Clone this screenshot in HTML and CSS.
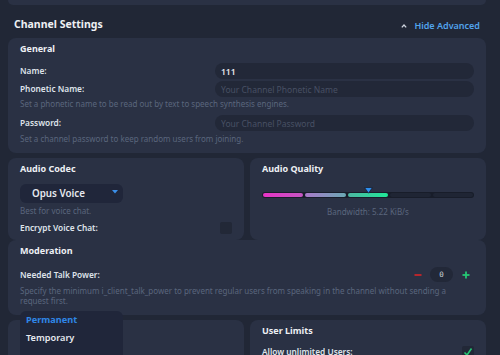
FILE: index.html
```html
<!DOCTYPE html>
<html>
<head>
<meta charset="utf-8">
<link rel="stylesheet" href="styles.css">
</head>
<body>
<div class="page">
  <div class="prev-card"></div>

  <div class="header">
    <h1 class="page-title">Channel Settings</h1>
    <button class="toggle">
      <svg class="chev" width="6" height="4" viewBox="0 0 6 4"><polyline points="0.8,3.4 3,1 5.2,3.4" fill="none" stroke="#cfd5df" stroke-width="1.3"/></svg>
      <span>Hide Advanced</span>
    </button>
  </div>

  <section class="card general">
    <h2 class="card-title">General</h2>
    <div class="fields">
      <div class="field"><label class="label">Name:</label><input class="input" value="111"></div>
      <div class="field"><label class="label">Phonetic Name:</label><input class="input" placeholder="Your Channel Phonetic Name"></div>
    </div>
    <p class="desc d1">Set a phonetic name to be read out by text to speech synthesis engines.</p>
    <div class="field f3"><label class="label">Password:</label><input class="input" placeholder="Your Channel Password"></div>
    <p class="desc d2">Set a channel password to keep random users from joining.</p>
  </section>

  <div class="row2 audio">
    <section class="card codec">
      <h2 class="card-title">Audio Codec</h2>
      <div class="select">
        <span>Opus Voice</span>
        <svg width="6" height="4" viewBox="0 0 6 4"><polygon points="0,0 6,0 3,3.5" fill="#3b8fe8"/></svg>
      </div>
      <p class="desc d3">Best for voice chat.</p>
      <div class="check-row">
        <span class="label">Encrypt Voice Chat:</span>
        <span class="checkbox"></span>
      </div>
    </section>
    <section class="card quality">
      <h2 class="card-title">Audio Quality</h2>
      <div class="meter">
        <div class="bar">
          <span class="seg s1"></span><span class="seg s2"></span><span class="seg s3"></span><span class="seg s4"></span><span class="seg s5"></span>
        </div>
        <svg class="marker" width="9" height="7" viewBox="0 0 9 7"><polygon points="0.5,0.5 8.5,0.5 4.5,6.2" fill="#2d8ff0" stroke="#1a2030" stroke-width="0.8"/></svg>
      </div>
      <p class="desc center bw">Bandwidth: 5.22 KiB/s</p>
    </section>
  </div>

  <section class="card moderation">
    <h2 class="card-title">Moderation</h2>
    <div class="power-row">
      <span class="label">Needed Talk Power:</span>
      <div class="stepper">
        <svg class="minus" width="8" height="8" viewBox="0 0 8 8"><rect x="0.5" y="3.1" width="7" height="1.8" fill="#c5262b"/></svg>
        <span class="num">0</span>
        <svg class="plus" width="8" height="8" viewBox="0 0 8 8"><rect x="0.5" y="3.1" width="7" height="1.8" fill="#25c774"/><rect x="3.1" y="0.5" width="1.8" height="7" fill="#25c774"/></svg>
      </div>
    </div>
    <p class="desc d4">Specify the minimum i_client_talk_power to prevent regular users from speaking in the channel without sending a request first.</p>
  </section>

  <div class="row2 bottom">
    <section class="card type">
      <ul class="menu">
        <li class="item active">Permanent</li>
        <li class="item">Temporary</li>
      </ul>
    </section>
    <section class="card limits">
      <h2 class="card-title">User Limits</h2>
      <div class="check-row">
        <span class="label">Allow unlimited Users:</span>
        <span class="checkbox on"><svg width="12" height="12" viewBox="0 0 12 12"><polyline points="2.5,6.5 5,9 9.5,2.5" fill="none" stroke="#25c774" stroke-width="1.6"/></svg></span>
      </div>
    </section>
  </div>
</div>
</body>
</html>
```

FILE: styles.css
```css
* { box-sizing: border-box; }

html, body {
  margin: 0;
  height: 355px;
  overflow: hidden;
  background: #212736;
}

body {
  font-family: "Noto Sans", "Open Sans", sans-serif;
  color: #dfe3ea;
}

.page {
  width: 500px;
  height: 355px;
  overflow: hidden;
  padding: 0 14px 0 8px;
}

.prev-card {
  height: 5px;
  background: #2a3144;
  border-radius: 0 0 8px 8px;
}

.header {
  height: 33px;
  padding: 4px 6px 0 6px;
  display: flex;
  align-items: center;
  justify-content: space-between;
}

.page-title {
  margin: 0;
  font-size: 10.5px;
  font-weight: 700;
  color: #eef0f4;
  line-height: 14px;
}

.toggle {
  margin-top: 4px;
  background: none;
  border: 0;
  padding: 0;
  display: flex;
  align-items: center;
  gap: 7px;
  font-family: inherit;
  font-size: 9px;
  font-weight: 600;
  color: #52a4ec;
  line-height: 12px;
}

.chev { display: block; }

.card {
  background: #2a3144;
  border-radius: 8px;
  padding: 4px 12px 8px;
}

.card-title {
  margin: 0;
  font-size: 9px;
  font-weight: 700;
  color: #eef0f4;
  line-height: 14px;
}

.general { height: 115px; }

.fields {
  margin-top: 7px;
  display: flex;
  flex-direction: column;
  gap: 2px;
}

.field {
  display: grid;
  grid-template-columns: 195px 1fr;
  align-items: center;
  height: 16px;
}

.label {
  font-size: 8.3px;
  font-weight: 600;
  color: #dfe3ea;
  line-height: 12px;
}

.input {
  height: 16px;
  border: 0;
  outline: 0;
  border-radius: 8px;
  background: #222838;
  padding: 0 6px;
  font-family: inherit;
  font-size: 8.5px;
  font-weight: 600;
  color: #e3e6ec;
}

.input::placeholder {
  color: #485064;
  font-weight: 400;
}

.desc {
  margin: 0;
  font-size: 8px;
  line-height: 12px;
  color: #5a667d;
}

.d1 { margin-top: 1px; }
.f3 { margin-top: 5px; }
.d2 { margin-top: 2px; }

.row2 {
  margin-top: 5px;
  display: grid;
  grid-template-columns: 1fr 1fr;
  gap: 6px;
}

.audio { height: 82px; }

.codec { padding-bottom: 6px; }

.select {
  margin-top: 8px;
  width: 103px;
  height: 19px;
  border-radius: 6px;
  background: #20263a;
  display: flex;
  align-items: center;
  justify-content: space-between;
  padding: 0 5px 0 12px;
  font-size: 9.8px;
  font-weight: 600;
  color: #e6e9ef;
}

.select svg { margin-top: -4px; }

.d3 { margin-top: 2px; }

.check-row {
  margin-top: 5px;
  height: 12px;
  display: flex;
  align-items: center;
  justify-content: space-between;
}

.checkbox {
  width: 12px;
  height: 12px;
  border-radius: 2px;
  background: #222837;
}

.checkbox svg { display: block; }

.meter {
  position: relative;
  margin-top: 16px;
}

.bar {
  height: 6px;
  border-radius: 3px;
  background: #181d2a;
  padding: 1px;
  display: flex;
  gap: 2px;
}

.seg {
  flex: 1;
  border-radius: 2px;
}

.s1 { background: linear-gradient(90deg, #e733c6, #c456c2); }
.s2 { background: linear-gradient(90deg, #a979c9, #6aa9b4); }
.s3 { background: linear-gradient(90deg, #4db6a2, #1fe898); }
.s4, .s5 { background: #1f2534; }

.marker {
  position: absolute;
  left: 102px;
  top: -5px;
}

.center { text-align: center; }
.bw { margin-top: 8px; }

.moderation { height: 75px; }

.power-row {
  margin-top: 9px;
  height: 15px;
  display: flex;
  align-items: center;
  justify-content: space-between;
}

.stepper {
  display: flex;
  align-items: center;
}

.minus { margin-right: 8px; }
.plus { margin-left: 9px; margin-right: 4px; }

.num {
  width: 23px;
  height: 15px;
  border-radius: 8px;
  background: #222838;
  font-family: "DejaVu Sans Mono", monospace;
  font-size: 7.5px;
  color: #cfd4dc;
  display: flex;
  align-items: center;
  justify-content: center;
}

.d4 {
  margin-top: 4px;
  line-height: 10px;
}

.bottom { height: 60px; }

.type { position: relative; }

.menu {
  position: absolute;
  left: 12px;
  top: -9px;
  width: 103px;
  height: 60px;
  margin: 0;
  padding: 0;
  list-style: none;
  background: #20263a;
  border-radius: 6px;
}

.item {
  height: 17.5px;
  line-height: 17.5px;
  padding-left: 6px;
  font-size: 9.2px;
  font-weight: 600;
  color: #e6e9ef;
}

.item.active {
  color: #2f86e6;
  font-weight: 700;
}

.limits .check-row { margin-top: 8px; }
```
